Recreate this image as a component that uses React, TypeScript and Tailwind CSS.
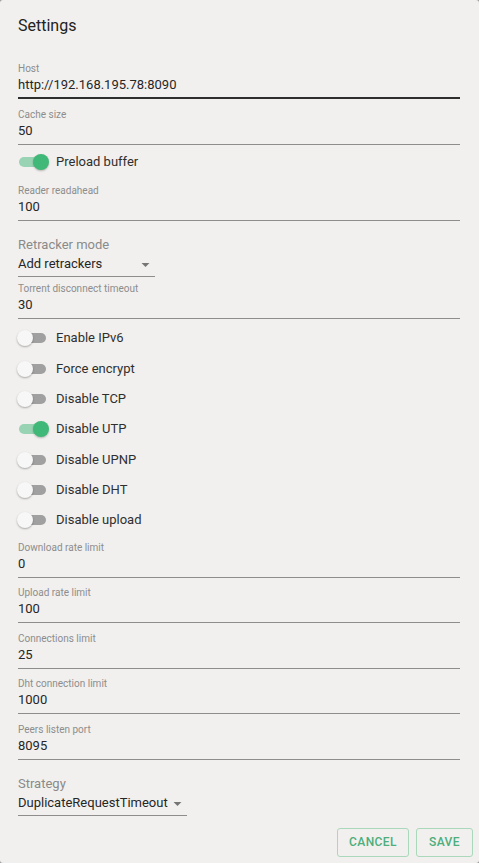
import React from "react";

type FieldProps = { label: string; value: string; className?: string; hover?: boolean };

function TextField({ label, value, className = "", hover = false }: FieldProps) {
  return (
    <div
      className={`${className} ${
        hover ? "border-b-2 border-[#2e2e2e] pb-[2px]" : "border-b border-[#8e8d8c] pb-[3px]"
      }`}
    >
      <div className="h-[12px] text-[10px] leading-[12px] text-[#8d8d8d]">{label}</div>
      <div className="h-[20px] text-[13px] leading-[20px] text-[#262626]">{value}</div>
    </div>
  );
}

function SelectField({ label, value, width, className = "" }: { label: string; value: string; width: string; className?: string }) {
  return (
    <div className={className}>
      <div className="h-[16px] text-[13px] leading-[16px] text-[#8a8a8a]">{label}</div>
      <div className={`${width} mt-[2px] flex items-center justify-between border-b border-[#8e8d8c] pb-[2.5px]`}>
        <span className="h-[18px] text-[13px] leading-[18px] text-[#262626] whitespace-nowrap">{value}</span>
        <svg className="w-[19px] h-[19px] shrink-0" viewBox="0 0 24 24" fill="#767676">
          <path d="M7 10l5 5 5-5z" />
        </svg>
      </div>
    </div>
  );
}

function SwitchRow({ label, on = false }: { label: string; on?: boolean }) {
  return (
    <div className="flex items-center h-[30.33px]">
      <span className="relative -ml-[1px] w-[32px] h-[16px] shrink-0">
        <span
          className={`absolute left-[2px] top-[3px] w-[27px] h-[10px] rounded-full ${
            on ? "bg-[#98d4b3]" : "bg-[#a0a0a0]"
          }`}
        />
        <span
          className={`absolute top-0 w-[16px] h-[16px] rounded-full ${
            on
              ? "left-[16px] bg-[#40b878] shadow-[0_1px_2px_rgba(0,0,0,0.25)]"
              : "left-0 bg-[#f7f7f7] shadow-[0_1px_2px_rgba(0,0,0,0.3)]"
          }`}
        />
      </span>
      <span className="ml-[7px] text-[13px] leading-[16px] text-[#2f2f2f]">{label}</span>
    </div>
  );
}

export default function App() {
  const switches = [
    { label: "Enable IPv6", on: false },
    { label: "Force encrypt", on: false },
    { label: "Disable TCP", on: false },
    { label: "Disable UTP", on: true },
    { label: "Disable UPNP", on: false },
    { label: "Disable DHT", on: false },
    { label: "Disable upload", on: false },
  ];

  const limits = [
    { label: "Upload rate limit", value: "100" },
    { label: "Connections limit", value: "25" },
    { label: "Dht connection limit", value: "1000" },
    { label: "Peers listen port", value: "8095" },
  ];

  return (
    <div className="w-[479px] h-[863px] bg-[#9a9a9a] font-['Roboto',sans-serif]">
      <div className="w-full h-full bg-[#f1f0ee] rounded-[3px] flex flex-col overflow-hidden">
        <div className="pl-[18px] pr-[19px] flex flex-col">
          {/* Title */}
          <div className="mt-[14px] h-[24px] text-[16px] leading-[24px] text-[#222]">Settings</div>

          <TextField className="mt-[25px]" label="Host" value="http://192.168.195.78:8090" hover />
          <TextField className="mt-[10px]" label="Cache size" value="50" />

          <div className="mt-[2px]">
            <SwitchRow label="Preload buffer" on />
          </div>

          <TextField className="mt-[8px]" label="Reader readahead" value="100" />

          <SelectField className="mt-[15.5px]" label="Retracker mode" value="Add retrackers" width="w-[137px]" />

          <TextField className="mt-[6px]" label="Torrent disconnect timeout" value="30" />

          {/* Switches */}
          <div className="mt-[4px] flex flex-col">
            {switches.map((s) => (
              <SwitchRow key={s.label} label={s.label} on={s.on} />
            ))}
          </div>

          <TextField className="mt-[6px]" label="Download rate limit" value="0" />
          {limits.map((l) => (
            <TextField key={l.label} className="mt-[9.5px]" label={l.label} value={l.value} />
          ))}

          <SelectField className="mt-[16px]" label="Strategy" value="DuplicateRequestTimeout" width="w-[169px]" />
        </div>

        {/* Actions */}
        <div className="mt-[12px] pr-[6px] flex justify-end gap-[7px]">
          <button className="w-[72px] h-[28.4px] rounded-[3px] border border-[#a9d8bb] text-[#4cae7c] text-[12px] font-medium tracking-[0.4px] uppercase">
            Cancel
          </button>
          <button className="w-[57px] h-[28.4px] rounded-[3px] border border-[#a9d8bb] text-[#4cae7c] text-[12px] font-medium tracking-[0.4px] uppercase">
            Save
          </button>
        </div>
      </div>
    </div>
  );
}
